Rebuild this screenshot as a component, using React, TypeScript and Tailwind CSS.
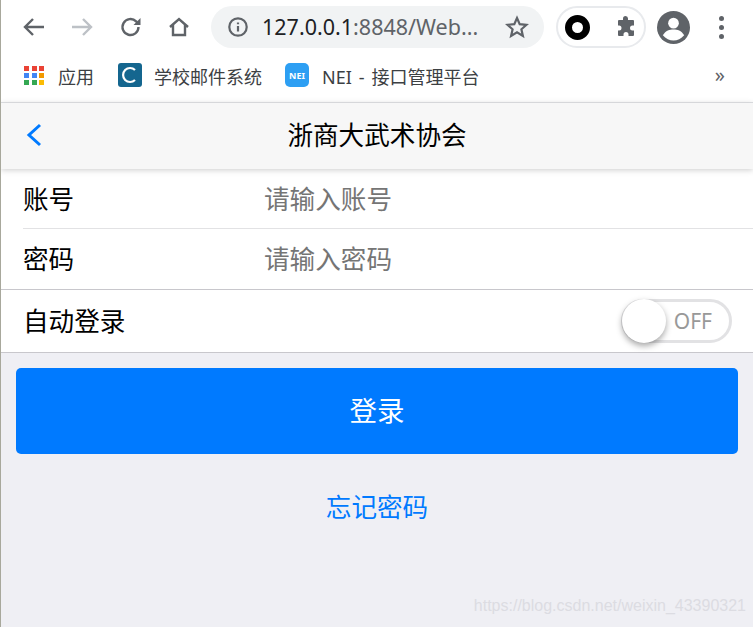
const cjk = "font-['Noto_Sans','Noto_Sans_CJK_SC',sans-serif]";

const BrowserToolbar = () => (
  <div className="flex h-[54px] items-center bg-white pl-[21px] pr-[20px]">
    <div className="flex w-[189px] items-center">
      <svg className="h-[24px] w-[24px]" viewBox="0 0 24 24" fill="none" stroke="#5f6368" strokeWidth="2.4">
        <path d="M22 12H3M11 4l-8 8 8 8" />
      </svg>
      <svg className="ml-[24px] h-[24px] w-[24px]" viewBox="0 0 24 24" fill="none" stroke="#bdc1c6" strokeWidth="2.4">
        <path d="M2 12h19M13 4l8 8-8 8" />
      </svg>
      <svg className="ml-[25px] h-[24px] w-[24px]" viewBox="0 0 24 24" fill="none">
        <path d="M19.500 12a8 8 0 1 1-2.400-5.700L18.500 8" stroke="#5f6368" strokeWidth="2.400" />
        <path d="M21.500 3v7h-7z" fill="#5f6368" />
      </svg>
      <svg className="ml-[24px] h-[24px] w-[24px]" viewBox="0 0 24 24" fill="none" stroke="#5f6368" strokeWidth="2.4">
        <path d="M3 12l9-8 9 8M6 10v10h12V10" />
      </svg>
    </div>
    <div className="flex h-[42px] w-[333px] items-center rounded-full bg-[#f1f3f4] pl-[16px] pr-[15px]">
      <svg className="h-[22px] w-[22px] shrink-0" viewBox="0 0 24 24" fill="none" stroke="#5f6368" strokeWidth="2.4">
        <circle cx="12" cy="12" r="9.5" />
        <path d="M12 11v6M12 7v2" />
      </svg>
      <span className={`ml-[13px] text-[21.5px] text-[#5f6368] whitespace-nowrap ${cjk}`}>
        <span className="text-[#202124]">127.0.0.1</span>:8848/Web...
      </span>
      <svg className="ml-auto h-[24px] w-[24px] shrink-0" viewBox="0 0 24 24" fill="none" stroke="#5f6368" strokeWidth="2.2">
        <path d="M12 3l2.700 6.200 6.800.6-5.100 4.500 1.500 6.600L12 17.400l-5.900 3.500 1.500-6.600-5.100-4.500 6.800-.6z" />
      </svg>
    </div>
    <div className="ml-[12px] flex h-[42px] w-[90px] items-center rounded-full border-2 border-[#e8eaed] pl-[7px]">
      <div className="h-[25px] w-[25px] rounded-full border-[7px] border-black bg-white" />
      <svg className="ml-[24px] h-[24px] w-[24px]" viewBox="0 0 24 24" fill="#5f6368">
        <path d="M9 3.500a2.500 2.500 0 0 1 5 0V5h5a1 1 0 0 1 1 1v4.500h-1.500a2.500 2.500 0 0 0 0 5H20V20a1 1 0 0 1-1 1h-4.500v-1.500a2.500 2.500 0 0 0-5 0V21H5a1 1 0 0 1-1-1v-4.500h1a2.500 2.500 0 0 0 0-5H4V6a1 1 0 0 1 1-1h4z" />
      </svg>
    </div>
    <svg className="ml-[11px] h-[33px] w-[33px] shrink-0" viewBox="0 0 34 34">
      <circle cx="17" cy="17" r="17" fill="#5f6368" />
      <circle cx="17" cy="12.500" r="5.500" fill="#fff" />
      <path d="M6 25c3-5 7-6 11-6s8 1 11 6c-3 3.500-7 5.500-11 5.500S9 28.500 6 25z" fill="#fff" />
    </svg>
    <div className="ml-[29px] flex flex-col gap-[4px]">
      <div className="h-[5px] w-[5px] rounded-full bg-[#5f6368]" />
      <div className="h-[5px] w-[5px] rounded-full bg-[#5f6368]" />
      <div className="h-[5px] w-[5px] rounded-full bg-[#5f6368]" />
    </div>
  </div>
);

const appsColors = ["#ea4335", "#ea4335", "#ea4335", "#4285f4", "#4285f4", "#f29900", "#34a853", "#34a853", "#fbbc04"];

const Bookmarks = () => (
  <div className={`flex h-[49px] items-center border-b border-[#dadce0] bg-white pb-[6px] pl-[23px] pr-[28px] text-[18px] text-[#3c4043] ${cjk}`}>
    <div className="grid w-[21px] grid-cols-3 gap-[2px]">
      {appsColors.map((c, i) => (
        <svg key={i} className="h-[5px] w-[5px]" viewBox="0 0 5 5">
          <rect width="5" height="5" fill={c} />
        </svg>
      ))}
    </div>
    <span className="ml-[13px] mt-[4px]">应用</span>
    <svg className="ml-[24px] h-[24px] w-[24px]" viewBox="0 0 24 24">
      <rect width="24" height="24" rx="3" fill="#14668f" />
      <path d="M17 7a7 7 0 1 0 0 10" fill="none" stroke="#fff" strokeWidth="2.200" />
    </svg>
    <span className="ml-[12px] mt-[4px]">学校邮件系统</span>
    <div className="ml-[23px] flex h-[24px] w-[24px] items-center justify-center rounded-[5px] bg-[#2d9ff3] text-[9px] font-bold leading-none text-white">
      NEI
    </div>
    <span className="ml-[13px] mt-[4px] flex gap-[7px] whitespace-nowrap">
      <span>NEI</span>
      <span>-</span>
      <span>接口管理平台</span>
    </span>
    <span className="ml-auto text-[20px] leading-none text-[#5f6368]">»</span>
  </div>
);

const FormRow = ({ label, placeholder, divider }: { label: string; placeholder: string; divider?: boolean }) => (
  <div className="pl-[22px]">
    <div className={`flex h-[60px] items-center pt-[3px] ${divider ? "border-b border-[#e2e2e4]" : ""}`}>
      <span className="w-[241px] text-[25.6px] text-black">{label}</span>
      <span className="text-[25.6px] text-[#757575]">{placeholder}</span>
    </div>
  </div>
);

const Toggle = () => (
  <div className="relative flex h-[44px] w-[111px] items-center justify-end rounded-full border-[3px] border-[#e2e2e4] bg-white pr-[17px] pt-[1px]">
    <span className="text-[21px] text-[#999]">OFF</span>
    <div className="absolute -left-[2px] -top-[3px] h-[44px] w-[44px] rounded-full bg-white shadow-[0_3px_6px_rgba(0,0,0,0.35)]" />
  </div>
);

const App = () => {
  return (
    <div className={`relative flex h-[627px] w-[753px] flex-col overflow-hidden border-l border-[#a8a89c] bg-[#efeff4] ${cjk}`}>
      <BrowserToolbar />
      <Bookmarks />
      <div className="relative z-10 flex h-[66px] items-center justify-center bg-[#f7f7f7] shadow-[0_1px_6px_#ccc]">
        <svg className="absolute left-[22px] top-[19px] h-[26px] w-[22px]" viewBox="0 0 22 26" fill="none" stroke="#007aff" strokeWidth="3">
          <path d="M17 3L6 13l11 10" />
        </svg>
        <span className="text-[25.6px] text-black">浙商大武术协会</span>
      </div>
      <div className="border-b border-[#c8c7cc] bg-white">
        <FormRow label="账号" placeholder="请输入账号" divider />
        <FormRow label="密码" placeholder="请输入密码" />
      </div>
      <div className="flex h-[63px] items-center justify-between border-b border-[#c8c7cc] bg-white pl-[22px] pr-[21px]">
        <span className="mt-[2px] text-[25.6px] text-black">自动登录</span>
        <Toggle />
      </div>
      <div className="mx-[15px] mt-[15px] flex h-[86px] items-center justify-center rounded-[5px] bg-[#007aff] text-[27.5px] text-white">
        登录
      </div>
      <div className="mt-[31px] text-center text-[25.6px] leading-[46px] text-[#007aff]">忘记密码</div>
      <span className="absolute bottom-[9px] right-[7px] font-['Liberation_Sans',sans-serif] text-[16px] text-[#dcdce2]">
        https://blog.csdn.net/weixin_43390321
      </span>
    </div>
  );
};

export default App;
